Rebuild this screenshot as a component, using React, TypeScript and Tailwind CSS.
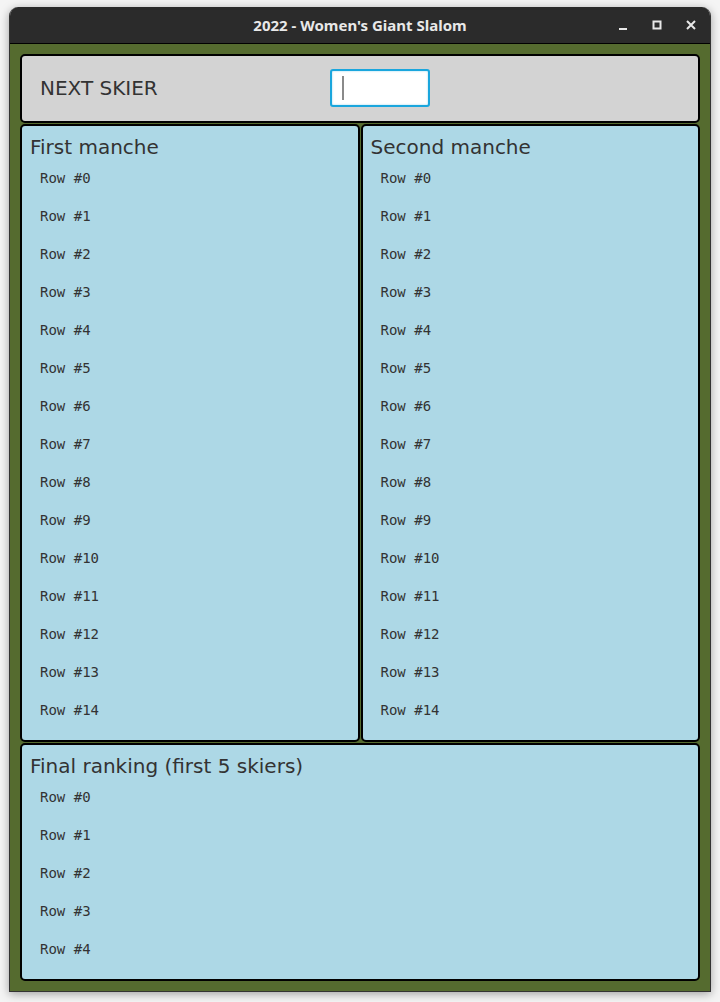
import React from "react";

const rows15 = Array.from({ length: 15 }, (_, i) => `Row #${i}`);
const rows5 = Array.from({ length: 5 }, (_, i) => `Row #${i}`);

function RowList({ rows }: { rows: string[] }) {
  return (
    <div className="flex flex-col">
      {rows.map((r) => (
        <div
          key={r}
          className="h-[38px] flex items-center pl-[18px] text-[14px] text-[#333333]"
          style={{ fontFamily: '"DejaVu Sans Mono", monospace' }}
        >
          {r}
        </div>
      ))}
    </div>
  );
}

function Panel({ title, rows }: { title: string; rows: string[] }) {
  return (
    <div className="bg-[#add8e6] border-2 border-black rounded-[5px] pt-[9px] pb-[11px]">
      <div className="h-[24px] flex items-center pl-[8px] text-[20px] text-[#333333]">{title}</div>
      <RowList rows={rows} />
    </div>
  );
}

export default function App() {
  return (
    <div
      className="w-[720px] h-[1002px] bg-[#f4f4f4] pt-[7px] px-[9px]"
      style={{ fontFamily: '"DejaVu Sans", sans-serif' }}
    >
      <div className="w-[702px] rounded-t-[9px] overflow-hidden shadow-[0_2px_10px_rgba(0,0,0,0.35)] border border-[#333333] border-t-0">
        {/* TITLE BAR */}
        <div className="relative h-[37px] bg-[#2b2b2b] flex items-center justify-center border-b border-black">
          <span
            className="text-[15px] font-bold text-[#e8e8e8]"
            style={{ fontFamily: '"Noto Sans", sans-serif' }}
          >
            2022 - Women's Giant Slalom
          </span>
          <div className="absolute right-[13px] top-0 h-full flex items-center gap-[22px]">
            <svg width="12" height="12" viewBox="0 0 12 12">
              <rect x="2" y="9" width="8" height="2" fill="#e8e8e8" />
            </svg>
            <svg width="12" height="12" viewBox="0 0 12 12">
              <rect x="2.5" y="2.5" width="7" height="7" fill="none" stroke="#e8e8e8" strokeWidth="2" />
            </svg>
            <svg width="12" height="12" viewBox="0 0 12 12">
              <path d="M2 2 L10 10 M10 2 L2 10" stroke="#e8e8e8" strokeWidth="2" />
            </svg>
          </div>
        </div>

        {/* CONTENT */}
        <div className="bg-[#556b2f] pt-[10px] pb-[10px] px-[10px] flex flex-col gap-px">
          <div className="h-[69px] bg-[#d3d3d3] border-2 border-black rounded-[5px] flex items-center pb-[2px]">
            <div className="w-[308px] pl-[18px] text-[20px] text-[#333333]">NEXT SKIER</div>
            <div className="w-[100px] h-[38px] bg-white border-2 border-[#1aa6dd] rounded-[3px] flex items-center pl-[10px] shadow-[inset_0_0_2px_rgba(26,166,221,0.5)]">
              <div className="w-[2px] h-[24px] bg-[#8a8a8a]" />
            </div>
          </div>

          <div className="grid grid-cols-2 gap-px">
            <Panel title="First manche" rows={rows15} />
            <Panel title="Second manche" rows={rows15} />
          </div>

          <Panel title="Final ranking (first 5 skiers)" rows={rows5} />
        </div>
      </div>
    </div>
  );
}
